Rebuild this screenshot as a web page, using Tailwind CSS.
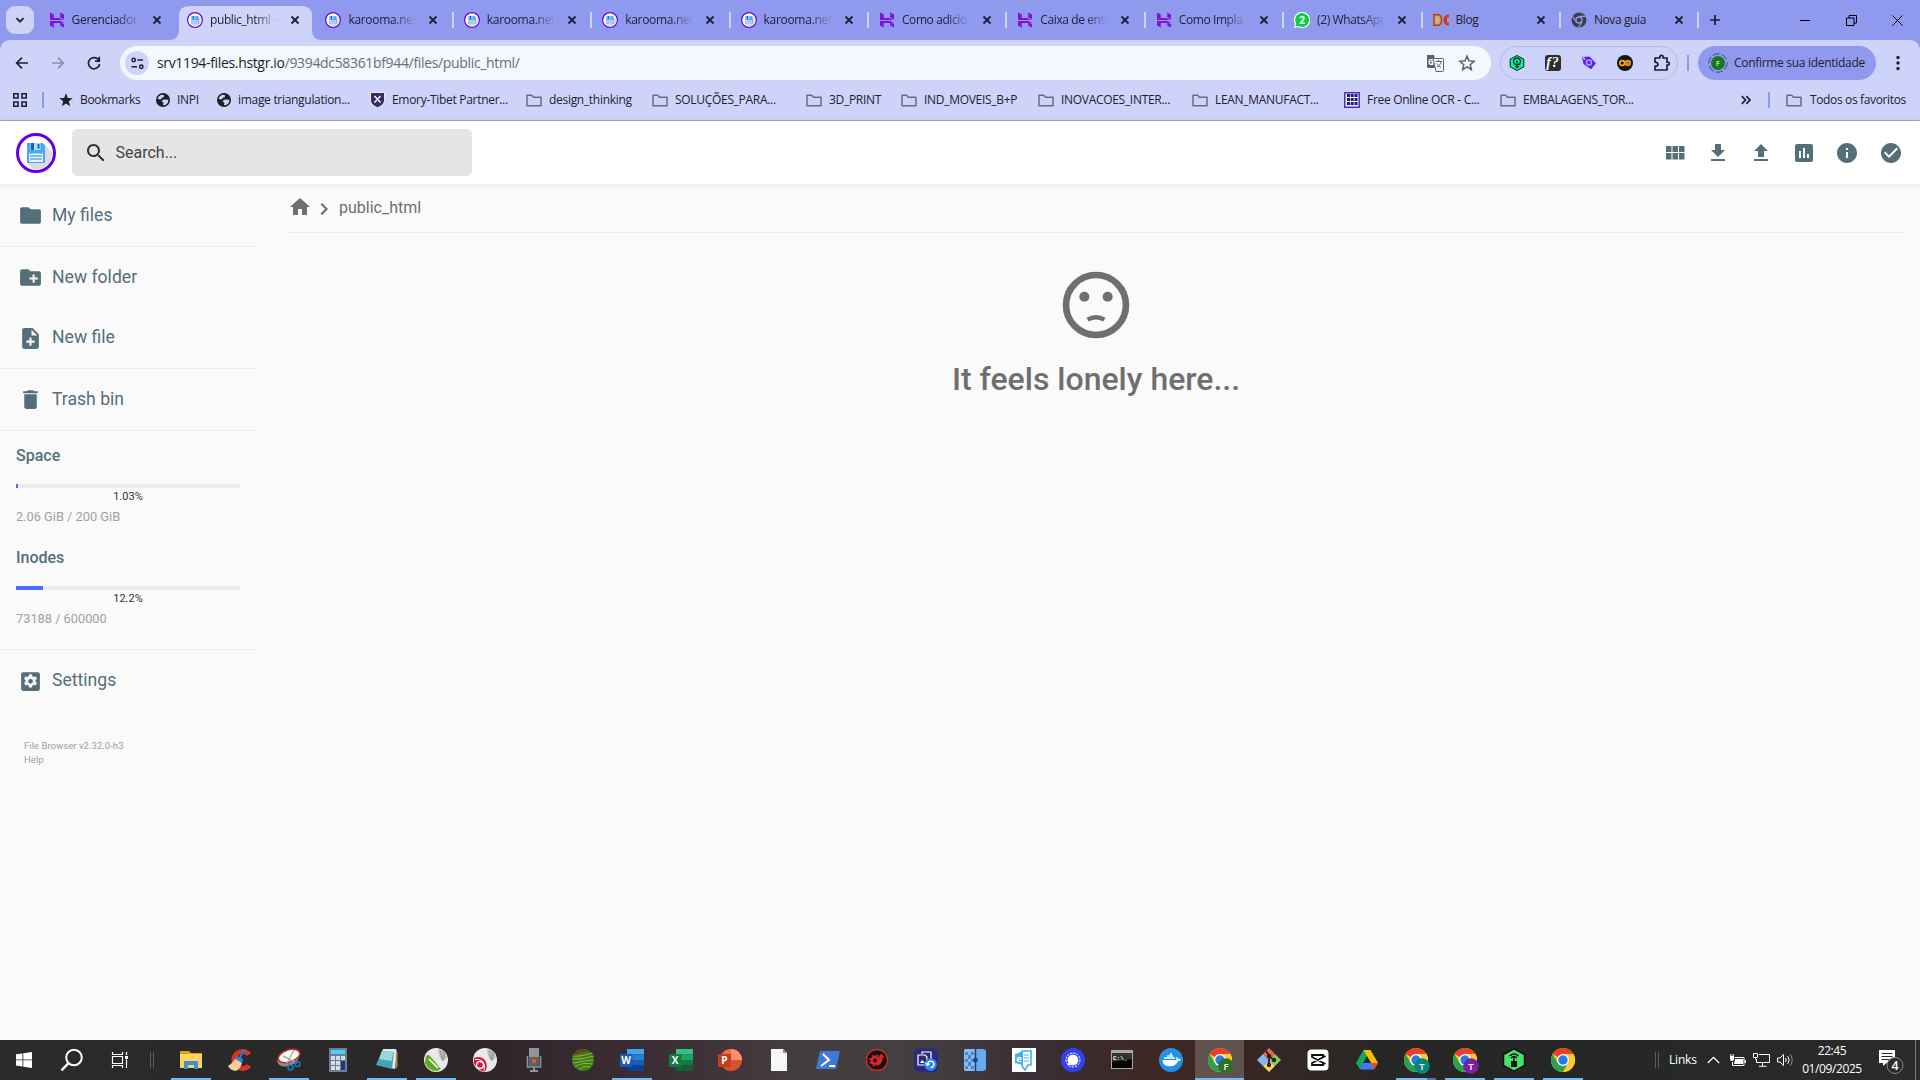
<!DOCTYPE html>
<html lang="pt-BR">
<head>
<meta charset="utf-8">
<title>public_html - File Browser</title>
<script src="https://cdn.jsdelivr.net/npm/@tailwindcss/browser@4"></script>
</head>
<body class="w-[1920px] h-[1080px] overflow-hidden bg-[#fafafa] flex flex-col font-['Open_Sans',sans-serif] text-xs text-[#1f2030]">

<svg class="hidden">
  <symbol id="x" viewBox="0 0 10 10"><path d="M1.5 1.5l7 7M8.5 1.5l-7 7" stroke="#1d1f33" stroke-width="1.8" fill="none"/></symbol>
  <symbol id="host" viewBox="0 0 16 16"><path d="M1 .5l3.800 2v3.600h5.600l3.800 2H1zM11.200.5L15 2.400v5L11.200 5.400zM1 9h10.200l3.800 2H4.800v4.500L1 13.600zM11.200 10.500l3.800 1.600v3.400l-3.800-1.900z" fill="#8311d8"/></symbol>
  <symbol id="disk" viewBox="0 0 40 40"><circle cx="20" cy="20" r="18.500" fill="#fff" stroke="#6200ee" stroke-width="3"/><path d="M29 11l7 9a16 16 0 0 1-19 16l-6-6z" fill="#dcdcdc"/><path d="M11 10h15.500L29 12.500V30H11z" fill="#40a9fb"/><path d="M14.500 10h10v7h-10z" fill="#b6defc"/><path d="M15 10h3v7h-3zM21.500 11h2v4.500h-2z" fill="#1565b0"/><path d="M13 20.500h14V29H13z" fill="#e4f3fe"/><path d="M14 23h12M14 26h12" stroke="#2a80c8" stroke-width="1"/></symbol>
  <symbol id="fold" viewBox="0 0 16 14"><path d="M1 2.200h4.700l1.700 2H15V12.800H1z" fill="none" stroke="#686c80" stroke-width="1.500" stroke-linejoin="round"/></symbol>
  <symbol id="globe" viewBox="0 0 14 14"><circle cx="7" cy="7" r="7" fill="#1f2024"/><path d="M5.200 1.800l3 .5-.5 2-2 .5-.5 1.500H3L1.700 6A5.500 5.500 0 0 1 5.200 1.800zM9 6.500l3.300.2a5.400 5.400 0 0 1-4 5.500L7 12l.5-2L5.600 8.200 7 6.800z" fill="#ced4f9"/></symbol>
  <symbol id="chrome" viewBox="0 0 24 24"><circle cx="12" cy="12" r="12" fill="#ffc927"/><path d="M12 12L1.600 6A12 12 0 0 1 22.400 6H12z" fill="#e8402f"/><path d="M1.600 6A12 12 0 0 0 12 24l5.200-9L12 12 6.800 15z" fill="#2aa14c"/><path d="M12 6h10.400a12 12 0 0 1-10.400 18l5.200-9z" fill="#ffc927"/><circle cx="12" cy="12" r="6" fill="#fff"/><circle cx="12" cy="12" r="4.700" fill="#2a7bea"/></symbol>
</svg>

<!-- Tab strip -->
<div class="h-10 shrink-0 bg-[#8f9aee] flex items-start">
  <div class="w-[28px] h-7 mt-[6px] ml-[6px] mr-[4.600px] rounded-[9px] bg-[#ced4f9] flex items-center justify-center"><svg class="size-[10px]" viewBox="0 0 10 10"><path d="M1.500 3.200L5 6.700l3.500-3.500" fill="none" stroke="#1d1f33" stroke-width="1.800"/></svg></div>
  <div id="tabs" class="flex h-10"></div>
  <div class="h-10 w-[32px] flex items-center justify-center"><svg class="size-[12px]" viewBox="0 0 12 12"><path d="M6 1v10M1 6h10" stroke="#1d1f33" stroke-width="1.700"/></svg></div>
  <div class="ml-auto flex h-10 items-center">
    <div class="w-[46px] flex justify-center"><svg class="size-[10px]" viewBox="0 0 10 10"><path d="M0 5.500h10" stroke="#000"/></svg></div>
    <div class="w-[46px] flex justify-center"><svg class="size-[11px]" viewBox="0 0 11 11"><path d="M.5 3h7.500v7.500H.5zM3 3V.5h7.500V8H8" stroke="#000" fill="none"/></svg></div>
    <div class="w-[46px] flex justify-center"><svg class="size-[11px]" viewBox="0 0 11 11"><path d="M.5.5l10 10M10.500.5l-10 10" stroke="#000" fill="none"/></svg></div>
  </div>
</div>

<!-- Toolbar and bookmarks -->
<div class="bg-[#8f9aee] shrink-0 h-[81px]">
<div class="bg-[#ced4f9] rounded-t-[10px] h-[81px] border-b border-[#a0a8cf]">
  <div class="h-[46px] flex items-center">
    <svg class="ml-[15px] size-[14px]" viewBox="0 0 14 14"><path d="M13 7H2M7 1.700L1.700 7 7 12.300" fill="none" stroke="#1d1f33" stroke-width="1.700"/></svg>
    <svg class="ml-[22px] size-[14px]" viewBox="0 0 14 14"><path d="M1 7h11M7 1.700L12.300 7 7 12.300" fill="none" stroke="#8b8faf" stroke-width="1.700"/></svg>
    <svg class="ml-[22px] size-[14px]" viewBox="0 0 14 14"><path d="M12 4.500A5.600 5.600 0 1 0 12.600 8M12.300.8v4.300H8" fill="none" stroke="#1d1f33" stroke-width="1.700"/></svg>
    <div class="ml-[19px] w-[1371px] h-[34px] rounded-full bg-[#f3f7fe] flex items-center">
      <div class="ml-[5px] size-6 rounded-full bg-[#ced4f9] flex items-center justify-center"><svg class="size-[13px]" viewBox="0 0 13 13"><g fill="none" stroke="#1d1f33" stroke-width="1.500"><circle cx="2.700" cy="3" r="1.700"/><path d="M6.500 3H12M.5 9.800H6"/><circle cx="10.300" cy="9.800" r="1.700"/></g></svg></div>
      <div class="ml-2 text-sm tracking-[-0.34px] text-[#6a6d79] whitespace-nowrap"><span class="text-[#1d1f28]">srv1194-files.hstgr.io</span>/9394dc58361bf944/files/public_html/</div>
      <svg class="ml-auto size-[17px]" viewBox="0 0 17 17"><path d="M0 0h7l3 13H1.500A1.500 1.500 0 0 1 0 11.500z" fill="#5f636d"/><path d="M6 3.500h9.500a1 1 0 0 1 1 1V15.500a1 1 0 0 1-1 1H9L6 3.500z" fill="#f3f7fe" stroke="#5f636d"/><text x="1" y="9.500" font-size="8" font-weight="700" fill="#fff">G</text><path d="M8.500 6.500h6.500M11.500 5v1.500M14 7c-.5 2.500-2 4-4 5M9.500 8.500c1 1.500 3 3 4.500 4" stroke="#5f636d" fill="none"/></svg>
      <svg class="ml-[14px] mr-[15px] size-[18px]" viewBox="0 0 24 24"><path d="M12 2.800l2.600 6.300 6.800.6-5.100 4.500 1.500 6.600-5.800-3.500-5.800 3.500 1.500-6.600-5.100-4.500 6.800-.6z" fill="none" stroke="#5f636d" stroke-width="2"/></svg>
    </div>
    <div class="ml-[9px] w-[178px] h-[34px] rounded-full border border-[#b4baea] flex items-center justify-between pl-[8px] pr-[6px]">
      <svg class="size-4" viewBox="0 0 16 16"><path d="M8 .5l6.800 3.700v7.600L8 15.500 1.200 11.800V4.200z" fill="#08f0a0" stroke="#05231b"/><circle cx="8" cy="6.500" r="3.400" fill="none" stroke="#05231b" stroke-width="1.200"/><path d="M8 5.500v7M6 11l2 2 2-2M7 6.500h2" stroke="#05231b" fill="none"/></svg>
      <div class="size-4 rounded-[3px] bg-[#2e2e2e] text-white font-['Liberation_Serif',serif] italic font-bold text-[14px] leading-4 text-center tracking-[1px]">f?</div>
      <svg class="size-4" viewBox="0 0 16 16"><path d="M1 2l7.500-.5 6.500 6.700-5 6L2.500 9z" fill="#5b20f5"/><circle cx="8" cy="7.500" r="2.500" fill="none" stroke="#b99cff" stroke-width="1.400"/><path d="M2 2.500l2 2" stroke="#ced4f9" stroke-width="1.300"/></svg>
      <svg class="size-4" viewBox="0 0 16 16"><circle cx="8" cy="8" r="8" fill="#141414"/><circle cx="5.200" cy="8" r="2.400" fill="none" stroke="#f9ab00" stroke-width="1.700"/><circle cx="10.800" cy="8" r="2.400" fill="#777" stroke="#e8910a" stroke-width="1.700"/></svg>
      <svg class="size-[18px]" viewBox="0 0 18 18"><path d="M2 4h4.800V3a1.700 1.700 0 0 1 3.400 0v1H14v4.200h.8a1.500 1.500 0 0 1 0 3H14V16H2v-3.500l1-.3a1.800 1.800 0 0 0 0-3.900l-1-.3z" fill="none" stroke="#1d1f33" stroke-width="1.700"/></svg>
    </div>
    <div class="ml-[9px] w-[2px] h-4 bg-[#8f9aee]"></div>
    <div class="ml-[9px] w-[178px] h-[34px] rounded-full bg-[#8f9aee] flex items-center">
      <svg class="ml-[10px] size-5" viewBox="0 0 20 20"><circle cx="10" cy="10" r="9.200" fill="none" stroke="#3c438c" stroke-width="1" stroke-dasharray="7 2.400"/><circle cx="10" cy="10" r="7" fill="#167a1c"/><text x="10" y="12.700" font-size="7.500" fill="#fff" text-anchor="middle">F</text></svg>
      <span class="ml-[6px] text-[12px] tracking-[-0.3px] whitespace-nowrap">Confirme sua identidade</span>
    </div>
    <svg class="ml-[20px] w-1 h-4" viewBox="0 0 4 16"><g fill="#1d1f33"><circle cx="2" cy="2.500" r="1.700"/><circle cx="2" cy="8" r="1.700"/><circle cx="2" cy="13.500" r="1.700"/></g></svg>
  </div>
  <div class="h-[28px] flex items-center">
    <svg class="ml-[13px] size-[14px]" viewBox="0 0 14 14"><path d="M.8.800h4.200v4.200H.8zM9 .8h4.200v4.200H9zM.8 9h4.200v4.200H.8zM9 9h4.200v4.200H9z" fill="none" stroke="#1d1f33" stroke-width="1.600"/></svg>
    <div class="ml-[15px] w-[2px] h-4 bg-[#8f9aee]"></div>
    <div id="bm" class="ml-[15px] flex items-center"></div>
    <svg class="ml-auto size-[10px]" viewBox="0 0 10 10"><path d="M.8 1.200L4.500 5 .8 8.800M5.300 1.200L9 5 5.300 8.800" fill="none" stroke="#1d1f33" stroke-width="1.700"/></svg>
    <div class="ml-[17px] w-[2px] h-4 bg-[#8f9aee]"></div>
    <svg class="ml-[16px] w-4 h-[14px]"><use href="#fold"/></svg>
    <span class="ml-2 w-[110px] tracking-[-0.36px] whitespace-nowrap">Todos os favoritos</span>
  </div>
</div>
</div>

<!-- File browser header -->
<div class="relative h-[64px] shrink-0 bg-white border-b border-black/5 shadow-[0_0_5px_rgba(0,0,0,0.1)] flex items-center font-[Roboto,sans-serif]">
  <svg class="ml-4 mt-px size-10"><use href="#disk"/></svg>
  <div class="ml-4 w-[400px] h-[47px] rounded-[5px] bg-[#e5e5e5] flex items-center">
    <svg class="ml-[12px] mt-px size-6 text-[#2e3338]" viewBox="0 0 24 24" fill="currentColor"><path d="M15.500 14h-.79l-.28-.27C15.410 12.590 16 11.110 16 9.500 16 5.910 13.090 3 9.500 3S3 5.910 3 9.500 5.910 16 9.500 16c1.610 0 3.090-.59 4.230-1.570l.27.28v.79l5 4.990L20.490 19l-4.990-5zm-6 0C7.010 14 5 11.990 5 9.500S7.010 5 9.500 5 14 7.010 14 9.500 11.990 14 9.500 14z"/></svg>
    <span class="ml-[7.500px] text-base text-[#444]">Search...</span>
  </div>
  <div class="ml-auto mt-px mr-[17.500px] flex gap-[19.200px] text-[#546e7a]">
    <svg class="size-6" viewBox="0 0 24 24" fill="currentColor"><path d="M3 11h5.500V5H3v6zm0 7.500h5.500v-6.500H3v6.500zm6.500 0h5.500v-6.500H9.500v6.500zm6.500 0h5.500v-6.500H16v6.500zM9.500 11h5.500V5H9.500v6zM16 5v6h5.500V5z"/></svg>
    <svg class="size-6" viewBox="0 0 24 24" fill="currentColor"><path d="M19 9h-4V3H9v6H5l7 7 7-7zM5 18v2h14v-2H5z"/></svg>
    <svg class="size-6" viewBox="0 0 24 24" fill="currentColor"><path d="M9 16h6v-6h4l-7-7-7 7h4zm-4 2h14v2H5z"/></svg>
    <svg class="size-6" viewBox="0 0 24 24" fill="currentColor"><path d="M19 3H5c-1.100 0-2 .9-2 2v14c0 1.100.9 2 2 2h14c1.100 0 2-.9 2-2V5c0-1.100-.9-2-2-2zM9 17H7v-7h2v7zm4 0h-2V7h2v10zm4 0h-2v-4h2v4z"/></svg>
    <svg class="size-6" viewBox="0 0 24 24" fill="currentColor"><path d="M12 2C6.480 2 2 6.480 2 12s4.480 10 10 10 10-4.480 10-10S17.520 2 12 2zm1 15h-2v-6h2v6zm0-8h-2V7h2v2z"/></svg>
    <svg class="size-6" viewBox="0 0 24 24" fill="currentColor"><path d="M12 2C6.480 2 2 6.480 2 12s4.480 10 10 10 10-4.480 10-10S17.520 2 12 2zm-2 15l-5-5 1.410-1.410L10 14.170l7.590-7.590L19 8l-9 9z"/></svg>
  </div>
</div>

<!-- Page body -->
<div class="flex-1 min-h-0 flex font-[Roboto,sans-serif]">
  <div class="w-64 shrink-0 text-[#546e7a] text-[17.600px]">
    <div class="h-[62px] border-b border-black/5 flex items-center">
      <svg class="ml-[18px] size-[25px]" viewBox="0 0 24 24" fill="currentColor"><path d="M10 4H4c-1.100 0-1.990.9-1.990 2L2 18c0 1.100.9 2 2 2h16c1.100 0 2-.9 2-2V8c0-1.100-.9-2-2-2h-8l-2-2z"/></svg>
      <span class="ml-[9px]">My files</span>
    </div>
    <div class="h-[122px] border-b border-black/5">
      <div class="h-[61px] flex items-center">
        <svg class="ml-[18px] size-[25px]" viewBox="0 0 24 24" fill="currentColor"><path d="M20 6h-8l-2-2H4c-1.110 0-1.990.89-1.990 2L2 18c0 1.110.89 2 2 2h16c1.110 0 2-.89 2-2V8c0-1.110-.89-2-2-2zm-1 8h-3v3h-2v-3h-3v-2h3V9h2v3h3v2z"/></svg>
        <span class="ml-[9px]">New folder</span>
      </div>
      <div class="h-[60px] flex items-center">
        <svg class="ml-[18px] size-[25px]" viewBox="0 0 24 24" fill="currentColor"><path d="M14 2H6c-1.100 0-1.990.9-1.990 2L4 20c0 1.100.89 2 1.990 2H18c1.100 0 2-.9 2-2V8l-6-6zm2 14h-3v3h-2v-3H8v-2h3v-3h2v3h3v2zm-3-7V3.500L18.500 9H13z"/></svg>
        <span class="ml-[9px]">New file</span>
      </div>
    </div>
    <div class="h-[62px] border-b border-black/5 flex items-center">
      <svg class="ml-[18px] size-[25px]" viewBox="0 0 24 24" fill="currentColor"><path d="M6 19c0 1.100.9 2 2 2h8c1.100 0 2-.9 2-2V7H6v12zM19 4h-3.500l-1-1h-5l-1 1H5v2h14V4z"/></svg>
      <span class="ml-[9px]">Trash bin</span>
    </div>
    <div class="h-[219px] border-b border-black/5 px-4 pt-[13px]">
      <div class="h-[102px] flex flex-col">
        <div class="text-base leading-6 h-[40px] font-medium">Space</div>
        <div class="h-1 w-[224px] bg-[#ececec]"><div class="h-1 bg-[#4d6bfe]" style="width:1.03%"></div></div>
        <div class="text-[11px] leading-4 h-[20px] pt-px w-[224px] text-center text-[#333]">1.03%</div>
        <div class="text-[12.800px] leading-5 mt-[-1px] text-[#a0a0a0]">2.06 GiB / 200 GiB</div>
      </div>
      <div class="h-[102px] flex flex-col">
        <div class="text-base leading-6 h-[40px] font-medium">Inodes</div>
        <div class="h-1 w-[224px] bg-[#ececec]"><div class="h-1 bg-[#4d6bfe]" style="width:12.2%"></div></div>
        <div class="text-[11px] leading-4 h-[20px] pt-px w-[224px] text-center text-[#333]">12.2%</div>
        <div class="text-[12.800px] leading-5 mt-[-1px] text-[#a0a0a0]">73188 / 600000</div>
      </div>
    </div>
    <div class="h-[61px] flex items-center">
      <svg class="ml-[18px] mt-px size-[25px]" viewBox="0 0 24 24"><path d="M5 3h14a2 2 0 0 1 2 2v14a2 2 0 0 1-2 2H5a2 2 0 0 1-2-2V5a2 2 0 0 1 2-2z" fill="currentColor"/><path d="M10.600 5h2.800l.4 1.900 1.200.7 1.800-.6 1.400 2.400-1.400 1.300v1.400l1.400 1.300-1.400 2.400-1.800-.6-1.200.7-.4 1.900h-2.800l-.4-1.900-1.200-.7-1.800.6-1.400-2.400 1.400-1.300v-1.400L5.800 9.400l1.400-2.400 1.800.6 1.200-.7z" fill="#fafafa"/><circle cx="12" cy="11.800" r="2.300" fill="currentColor"/></svg>
      <span class="ml-[9px]">Settings</span>
    </div>
    <div class="pl-6 pt-[28px] text-[9.600px] leading-[14px] text-[#a0a0a0]">File Browser v2.32.0-h3<br>Help</div>
  </div>
  <div class="flex-1 pl-8 pr-4 text-[#6f6f6f]">
    <div class="h-[48px] border-b border-black/5 flex items-center">
      <svg class="size-6 -mt-[4px]" viewBox="0 0 24 24" fill="currentColor"><path d="M10 20v-6h4v6h5v-8h3L12 3 2 12h3v8z"/></svg>
      <svg class="size-6 text-[#546e7a]" viewBox="0 0 24 24" fill="currentColor"><path d="M10 6L8.590 7.410 13.170 12l-4.580 4.590L10 18l6-6z"/></svg>
      <span class="ml-[3px] -mt-px text-base">public_html</span>
    </div>
    <div class="flex flex-col items-center pt-[32px]">
      <svg class="size-20" viewBox="0 0 24 24"><circle cx="12" cy="12" r="9" fill="none" stroke="currentColor" stroke-width="2"/><circle cx="8.500" cy="9.500" r="1.500" fill="currentColor"/><circle cx="15.500" cy="9.500" r="1.500" fill="currentColor"/><path d="M9.500 16.400Q12 14.900 14.500 16.400" fill="none" stroke="currentColor" stroke-width="1.350"/></svg>
      <div class="mt-[12px] text-[32px] leading-[44px] font-medium">It feels lonely here...</div>
    </div>
  </div>
</div>

<!-- Taskbar -->
<div class="h-10 shrink-0 text-white flex items-center bg-[linear-gradient(90deg,#2b2b2b_0%,#2a2828_20%,#30262a_26%,#3b2d35_34%,#453e3e_42%,#433f40_48%,#3a2d35_54%,#3d2824_60%,#392722_64%,#282726_72%,#252626_82%,#2b2b2b_100%)]">
  <svg class="ml-4 size-4" viewBox="0 0 16 16"><path d="M0 2.300l6.500-.9v6.100H0zM7.300 1.300L16 0v7.500H7.300zM0 8.300h6.500v6.200L0 13.600zM7.300 8.300H16V16l-8.700-1.200z" fill="#fff"/></svg>
  <svg class="ml-[28px] size-6" viewBox="0 0 24 24"><circle cx="14" cy="9.500" r="7.800" fill="none" stroke="#fff" stroke-width="2"/><path d="M8.500 15.200L1.500 22.300" stroke="#fff" stroke-width="2.400"/></svg>
  <svg class="ml-[27px] w-[18px] h-4" viewBox="0 0 18 16"><path d="M1.500 4.500h10v7h-10zM1.500 0v2.500h10V0M1.500 16v-2.500h10V16M15.500 0v3M15.500 7.500V16" fill="none" stroke="#fff" stroke-width="1.200"/><path d="M14 4h3v3h-3z" fill="#fff"/></svg>
  <svg class="ml-[20px] w-[6px] h-4" viewBox="0 0 6 16"><path d="M1.500 0v16M4.500 0v16" stroke="#5c5c5c"/></svg>
  <div id="apps" class="ml-[11px] flex h-10"></div>
  <svg class="ml-[67px] w-[6px] h-4" viewBox="0 0 6 16"><path d="M1.500 0v16M4.500 0v16" stroke="#5c5c5c"/></svg>
  <span class="ml-[9px] w-[38px] text-xs tracking-[-0.2px]">Links</span>
  <svg class="w-[13px] h-2" viewBox="0 0 13 8"><path d="M.8 7l5.700-5.700L12.200 7" fill="none" stroke="#fff" stroke-width="1.300"/></svg>
  <svg class="ml-[9px] w-[17px] h-[13px]" viewBox="0 0 17 13"><path d="M5.500 3.500h9.500v8H3.500V8" fill="none" stroke="#fff"/><path d="M6 5h8v5H5zM15.500 6H17v3h-1.500zM1 2h4v3.500L3.800 7H2L1 5.500z" fill="#fff"/><path d="M1.800 0v2M4.200 0v2" stroke="#fff"/></svg>
  <svg class="ml-[7px] w-[17px] h-[14px]" viewBox="0 0 17 14"><path d="M6 1.500h10.500v8H3.500V6M9.500 9.500v3.500M6 13.300h7.500M.5.500h4v4h-4zM2.500 4.500v2" fill="none" stroke="#fff"/></svg>
  <svg class="ml-[7px] w-[17px] h-[14px]" viewBox="0 0 17 14"><path d="M.5 5h2.500L6.500 1.500v11L3 9H.5zM8.500 5q1.500 2 0 4M10.700 3.200q3 3.800 0 7.600" fill="none" stroke="#fff"/><path d="M13 1q4.500 6 0 12" fill="none" stroke="#888"/></svg>
  <div class="ml-[7px] w-[62px] text-center text-xs leading-[18px] tracking-[-0.4px] whitespace-nowrap">22:45<br>01/09/2025</div>
  <svg class="ml-[15px] w-[26px] h-6 mt-1" viewBox="0 0 26 24"><path d="M1 0h16v13H8.500L5 16v-3H1z" fill="#fff"/><path d="M3.500 3.500h11M3.500 6.500h11M3.500 9.500h8" stroke="#2b2b2b"/><circle cx="17" cy="15.500" r="8" fill="#2b2b2b" stroke="#8a8a8a"/><text x="17" y="20" font-size="12.500" font-weight="600" fill="#fff" text-anchor="middle">4</text></svg>
  <div class="ml-auto mr-1 w-px h-10 bg-[#777]"></div>
</div>

<script>
const use = (id, cls) => `<svg class="${cls}"><use href="#${id}"/></svg>`;
const host = use('host', 'size-4'), disk = use('disk', 'size-4');
const tabs = [
  [host,'Gerenciador'],[disk,'public_html -'],[disk,'karooma.net'],[disk,'karooma.net'],[disk,'karooma.net'],[disk,'karooma.net'],
  [host,'Como adicio'],[host,'Caixa de entr'],[host,'Como Impla'],
  ['<svg class="size-4" viewBox="0 0 16 16"><path d="M8 0a8 8 0 1 1-3.700 15L0 16l1-4A8 8 0 0 1 8 0z" fill="#fff"/><path d="M8 1a7 7 0 1 1-3.500 13L1.500 14.500 2.100 11.500A7 7 0 0 1 8 1z" fill="#0ccf47"/><text x="8" y="11.800" font-size="10" font-weight="700" fill="#fff" text-anchor="middle">2</text></svg>','(2) WhatsApp'],
  ['<svg class="size-4" viewBox="0 0 16 16"><path d="M1 2.700h4.500q3 1 3 5.300t-3 5.300H1z" fill="#e9a04a" stroke="#b73a12" stroke-width="1.400"/><path d="M2.500 5.500h3.500v5H2.500z" fill="#8fc5bb"/><path d="M16 2.500q-5.500 0-5.500 5.500t5.500 5.500V10.500h-2v-5h2z" fill="#d23718"/></svg>','Blog'],
  ['<svg class="size-4" viewBox="0 0 16 16"><circle cx="8" cy="8" r="7.500" fill="#3d404c"/><circle cx="8" cy="8" r="3" fill="#3d404c" stroke="#8f9aee" stroke-width="1.300"/><path d="M8 4.400h7M4.900 9.800L1.400 4M11 9.800L7.700 15.500" stroke="#8f9aee" stroke-width="1.200"/></svg>','Nova guia']
];
document.getElementById('tabs').innerHTML = tabs.map(([ic, t], i) => {
  const on = i === 1, sep = i >= 2;
  return `<div class="relative w-[138.400px] h-10 flex items-center ${on ? 'z-10' : ''}">
    ${on ? '<svg class="absolute left-[-8px] top-[6px] w-[154px] h-[34px]" viewBox="0 0 154 34"><path d="M0 34q10 0 10-10V10Q10 0 20 0h113q10 0 10 10v14q0 10 10 10z" fill="#ced4f9"/></svg>' : ''}
    <div class="relative ml-[10px] flex items-center">${ic}<span class="ml-[7px] w-[70px] whitespace-nowrap text-xs ${t === 'Gerenciador' || t === 'karooma.net' ? 'tracking-[-0.3px]' : 'tracking-[-0.400px]'} ${i === 10 || i === 11 ? '' : '[mask-image:linear-gradient(90deg,#000_65%,transparent_97%)]'}">${t}</span>${use('x','ml-[10px] size-[10px]')}</div>
    ${sep ? '<div class="ml-auto w-[2px] h-4 bg-[#ced4f9]"></div>' : ''}</div>`;
}).join('');

const f = use('fold', 'w-4 h-[14px] shrink-0'), g = use('globe', 'size-[14px] shrink-0');
const bm = [
  [97,'<svg class="w-[14px] h-[14px]" viewBox="0 0 14 14"><path d="M7 .3l1.800 4.700 5 .2-4 3.100 1.400 5L7 10.500l-4.200 2.800 1.400-5-4-3.100 5-.2z" fill="#1f2024"/></svg>','Bookmarks'],
  [61,g,'INPI'],[153,g,'image triangulation...'],
  [156,'<svg class="w-[15px] h-4" viewBox="0 0 15 16"><path d="M.5.5h14V9q-1 4.500-7 6.800Q1.500 13.500.5 9z" fill="#3a2a6c" stroke="#e8e8f5"/><path d="M4.500 4l6 6.500M10.500 4l-6 6.500" stroke="#fff" stroke-width="1.400"/></svg>','Emory-Tibet Partner...'],
  [126,f,'design_thinking'],[154,f,'SOLUÇÕES_PARA...'],[95,f,'3D_PRINT'],[137,f,'IND_MOVEIS_B+P'],[154,f,'INOVACOES_INTER...'],[152,f,'LEAN_MANUFACT...'],
  [156,'<svg class="size-4" viewBox="0 0 16 16"><path d="M.75.75h14.500v14.500H.75z" fill="#eef" stroke="#4b2fb5" stroke-width="1.500"/><path d="M4.500 2v12M8.200 2v12M12 2v12" stroke="#231a6b" stroke-width="3" stroke-dasharray="3 1"/></svg>','Free Online OCR - C...'],
  [150,f,'EMBALAGENS_TOR...']
];
document.getElementById('bm').innerHTML = bm.map(([w, ic, t]) =>
  `<div class="flex items-center whitespace-nowrap shrink-0" style="width:${w}px">${ic}<span class="ml-[7px] text-xs tracking-[-0.3px]">${t}</span></div>`).join('');

const s = b => `<svg class="size-6" viewBox="0 0 24 24">${b}</svg>`;
const T = (x, y, z, t, c) => `<text x="${x}" y="${y}" font-size="${z}" font-weight="700" text-anchor="middle" fill="${c || '#fff'}">${t}</text>`;
const chr = (c, t) => `<svg class="w-[28px] h-[26px] ml-[4px] mt-[2px]" viewBox="0 0 28 26"><use href="#chrome" width="24" height="24"/><circle cx="18" cy="18" r="7.800" fill="${c}"/><text x="18" y="21.500" font-size="9.500" font-weight="600" text-anchor="middle" fill="#fff">${t}</text></svg>`;
const office = (c, a, b, d, l) => s(`<path d="M7 1h17v5.500H7z" fill="${a}"/><path d="M7 6.500h17V12H7z" fill="${b}"/><path d="M7 12h17v5.500H7z" fill="${d}"/><path d="M7 17.500h17V23H7z" fill="${c}"/><path d="M0 6h12.500v13H0z" fill="${d}"/>${T(6.200,16.200,10,l)}`);
const corel = (b) => s(`<circle cx="12" cy="12" r="12" fill="#e9e9e9"/><path d="M14 1q8 1 9 9l-4 3q-5-4-5-12z" fill="#c4c4c4"/><path d="M16 2l2 10M19 3l0 9M21 5l-2 8" stroke="#888" fill="none" stroke-width=".8"/>${b}`);
const apps = [
  [1,s('<path d="M1 3h9l2 2h11v5H1z" fill="#e0a010"/><path d="M1 6h22v14H1z" fill="#ffd45e"/><path d="M5 13h14v8h-4v-4H9v4H5z" fill="#3b92d8"/>')],
  [0,s('<path d="M23 5A11 11 0 1 0 23 19l-4-3a6 6 0 1 1 0-8z" fill="#d4362a"/><path d="M15 1l2 1-4 8-2-1z" fill="#1f7bd0"/><path d="M9 8l6 3-1 4-7-3z" fill="#2a86dc"/><path d="M7 11l7 4q-2 7-7 8Q2 22 0 18q4-2 7-7z" fill="#f5cf9c"/>')],
  [1,s('<ellipse cx="11" cy="11" rx="11" ry="7" transform="rotate(-20 11 11)" fill="#8d8d8d"/><ellipse cx="12" cy="8" rx="11" ry="6" transform="rotate(-18 12 8)" fill="#fff" stroke="#d12b2b" stroke-width="1.500"/><path d="M17 2L10 15M6 8l14 7" stroke="#aaa" stroke-width="1.500"/><circle cx="13.500" cy="19.500" r="2.500" fill="none" stroke="#1378c8" stroke-width="1.600"/><circle cx="20.500" cy="16" r="2.500" fill="none" stroke="#1378c8" stroke-width="1.600"/>')],
  [0,s('<path d="M3 0h18v24H3z" fill="#6e7e90"/><path d="M5 2h14v4H5z" fill="#46d5fa"/><path d="M5 8h4v4H5zM10 8h4v4h-4zM15 8h4v4h-4zM5 13h4v4H5zM10 13h4v4h-4zM5 18h4v4H5zM10 18h4v4h-4z" fill="#d7dde5"/><path d="M15 13h4v9h-4z" fill="#123c88"/>')],
  [1,s('<path d="M8 1h13l1 3-2 17-17-4z" fill="#dfe9ea"/><path d="M21 3l1.500 1v15l-2 2z" fill="#b78a3c"/><path d="M7 3l12 1-2 17-16-4z" fill="#47a3b1"/><path d="M7 3l11.500 1-2 9L4 11z" fill="#9ad7dd"/>')],
  [1,corel('<path d="M2 8q2-2 4 0l11 13-4 2Q4 23 1 15z" fill="#5cab1a"/><path d="M5 11l9 9" stroke="#fff" stroke-width="1.500"/>')],
  [0,corel('<path d="M1 10q8-3 12 4 2 5-1 9.500Q4 23 1 15z" fill="#d9173d"/><circle cx="7" cy="17" r="3.500" fill="#d9173d" stroke="#fff" stroke-width="1.500"/><path d="M2 11.500q8-1 9.500 6l-.5 5" stroke="#fff" fill="none"/>')],
  [0,s('<path d="M7 0h10v17H7z" fill="#8e969d"/><path d="M7 9h10v9H7z" fill="#59616a"/><circle cx="12" cy="13" r="2.200" fill="#f0581c"/><path d="M5.500 8v11h13V8" fill="none" stroke="#8e969d" stroke-width="1.600"/><path d="M12 19v4M8 23h8" stroke="#8e969d" stroke-width="2"/>')],
  [0,s('<circle cx="12" cy="12" r="11" fill="#3e7a1e"/><path d="M2 8Q9 9 21.500 5M1 11Q12 12 22.500 8M2 15Q11 13 22 12M4 19Q10 14 21.500 16M8 22Q12 17 19 19" fill="none" stroke="#94b838" stroke-width="1"/><path d="M4.500 4q7.500-6 14.500-.5Q11 3.500 3 8z" fill="#5f4a18"/>')],
  [1,office('#103f91','#41a5ee','#2b7cd3','#185abd','W')],
  [0,office('#185c37','#33c481','#21a366','#107c41','X')],
  [0,s('<circle cx="13" cy="12" r="11" fill="#d35230"/><path d="M13 1a11 11 0 0 1 11 11H13z" fill="#ff8f6b"/><path d="M2 12A11 11 0 0 1 13 1v11z" fill="#ed6c47"/><path d="M0 6h13v13H0z" fill="#c43e1c"/>'+T(6.5,16.2,10,'P'))],
  [0,s('<path d="M4 1h12l4 4v18H4z" fill="#f7f7f7"/><path d="M16 1v4h4z" fill="#888"/>')],
  [0,s('<path d="M4 3h20l-4 18H0z" fill="#3f78d6"/><path d="M7 6l6 6-8 6M13 18h6" stroke="#fff" stroke-width="2" fill="none"/>')],
  [0,s('<circle cx="12" cy="12" r="10.500" fill="#111" stroke="#d8262c" stroke-width="1.300"/><circle cx="10" cy="12.500" r="3.300" fill="none" stroke="#e0262c" stroke-width="2.500"/><circle cx="10" cy="12.500" r="5.200" fill="none" stroke="#e0262c" stroke-width="1.500" stroke-dasharray="2.300 1.800"/><path d="M13 17.500q5-2 4.500-8.500l2.500 1-3.500-4.500-3.500 3.500 2 .5q0 4-3 6z" fill="#e0262c"/>')],
  [0,s('<rect width="24" height="24" rx="5" fill="#2a2b7c"/><path d="M4 7h7l2 2v8H4zM8 6V4h9v7" fill="none" stroke="#fff" stroke-width="1.200"/><path d="M6 15l2-3 3 3z" fill="#fff"/><circle cx="16.500" cy="16.500" r="6.300" fill="#3184f4"/><path d="M13.500 16.500a3.200 3.200 0 1 1 3.200 3M11.800 15l1.700 2.500 2-2" fill="none" stroke="#fff" stroke-width="1.400"/>')],
  [0,s('<rect x="1" y="1" width="22" height="22" rx="3" fill="#66aaf0"/><path d="M3 1h9v22H3a2 2 0 0 1-2-2V3a2 2 0 0 1 2-2z" fill="#87bcf1"/><path d="M2 4h3v3H2zM8 4h3v3H8zM5 7h3v4H5zM2 11h3v3H2zM8 11h3v3H8zM5 14h3v4H5zM2 18h3v3H2zM8 18h3v3H8z" fill="#4b86c6"/><path d="M12.500 1v22" stroke="#1e3f6b" stroke-width="1.500"/><circle cx="12.500" cy="12" r="2.300" fill="#1e3f6b"/>')],
  [0,s('<path d="M0 0h24v24H0z" fill="#fff"/><path d="M10 3h9v14h-3l-3 5-3-4z" fill="#fff" stroke="#43b2e6" stroke-width="1.600"/><path d="M3 6l8-3v14l-8-2z" fill="#43b2e6"/><path d="M12 7h5M12 10h5M12 13h5" stroke="#43b2e6"/>'+T(7,13.5,9,'e'))],
  [0,s('<circle cx="12" cy="12" r="12" fill="#3240f0"/><path d="M12 6.500a5.500 5.500 0 1 1-2.800 10.300L6.500 17.500l.7-2.700A5.500 5.500 0 0 1 12 6.500z" fill="#fff"/><circle cx="12" cy="12" r="7" fill="none" stroke="#fff" stroke-width="1" stroke-dasharray="2.300 1"/>')],
  [0,s('<path d="M1 2h22v19H1z" fill="#aaa"/><path d="M2 5h20v15H2z" fill="#050505"/><path d="M2 5h20v6L2 14z" fill="#333"/><text x="3" y="11.500" font-size="6" font-weight="700" fill="#fff" font-family="Liberation Mono">C:\\_</text>')],
  [0,s('<circle cx="12" cy="12" r="12" fill="#2391e6"/><path d="M3.500 12h14q0-1.500-.5-3 2 0 2.500 2 1.500-.3 2.500.3-1 2-3 2-2 5-8 5-7.500 0-7.500-6.300z" fill="#fff"/><path d="M5 10h11M8 8h6M11 6h2" stroke="#fff" stroke-width="1.500"/>')],
  [2,chr('#336e27','F')],
  [0,s('<path d="M12 0l6 6-6 6-6-6z" fill="#f0624d"/><path d="M6 6l6 6-6 6-6-6z" fill="#84b5f7"/><path d="M18 6l6 6-6 6-6-6z" fill="#8fc655"/><path d="M12 12l6 6-6 6-6-6z" fill="#f7d869"/><path d="M9 3l3 4v10M12 8l5 4" stroke="#222" stroke-width="1.800" fill="none"/><circle cx="12" cy="17" r="2.200" fill="#222"/><circle cx="17" cy="12" r="2.200" fill="#222"/><circle cx="12" cy="8" r="2.200" fill="#222"/>')],
  [0,s('<rect x="1.500" y="1.500" width="21" height="21" rx="4" fill="#fff"/><path d="M19.500 8L6 15v2h11v-2.500M19.500 16L6 9V7h11v2.500" fill="none" stroke="#111" stroke-width="1.800"/>')],
  [0,s('<path d="M8.500 2h7L5 21.500 1 15z" fill="#0fa958"/><path d="M8.500 2h7L23 15h-7z" fill="#fbbc05"/><path d="M7.500 15H23l-4 6.500H5z" fill="#3b7df0"/><path d="M16 15h7l-4 6.500z" fill="#ea4335"/><path d="M12 8.500l4 6.500H8z" fill="#282828"/>')],
  [3,chr('#07877b','T')],[1,chr('#7a20a5','T')],
  [1,s('<path d="M12 .8l10.500 5.700v11L12 23.200 1.500 17.500v-11z" fill="#45e36b" stroke="#111" stroke-width="1.500"/><path d="M9 13h6v6H9z" fill="#111"/><path d="M12 9v5M7.500 8q4.500-4 9 0M9 10q3-3 6 0" stroke="#111" stroke-width="1.400" fill="none"/>')],
  [1,use('chrome','size-6')]
];
document.getElementById('apps').innerHTML = apps.map(([st, ic]) =>
  `<div class="relative w-[49px] h-10 flex items-center justify-center ${st === 2 ? 'bg-white/20' : ''}">${ic}${st ? `<div class="absolute bottom-0 h-[2px] bg-[#76b9ed] ${st === 2 ? 'inset-x-0' : 'left-[4.500px] w-10'}"></div>` : ''}${st === 3 ? '<div class="absolute bottom-0 left-[36px] w-[9px] h-[2px] bg-[#4d7ba0]"></div>' : ''}</div>`).join('');
document.getElementById('chrome').setAttribute('preserveAspectRatio', 'xMidYMid meet');
</script>
</body>
</html>
